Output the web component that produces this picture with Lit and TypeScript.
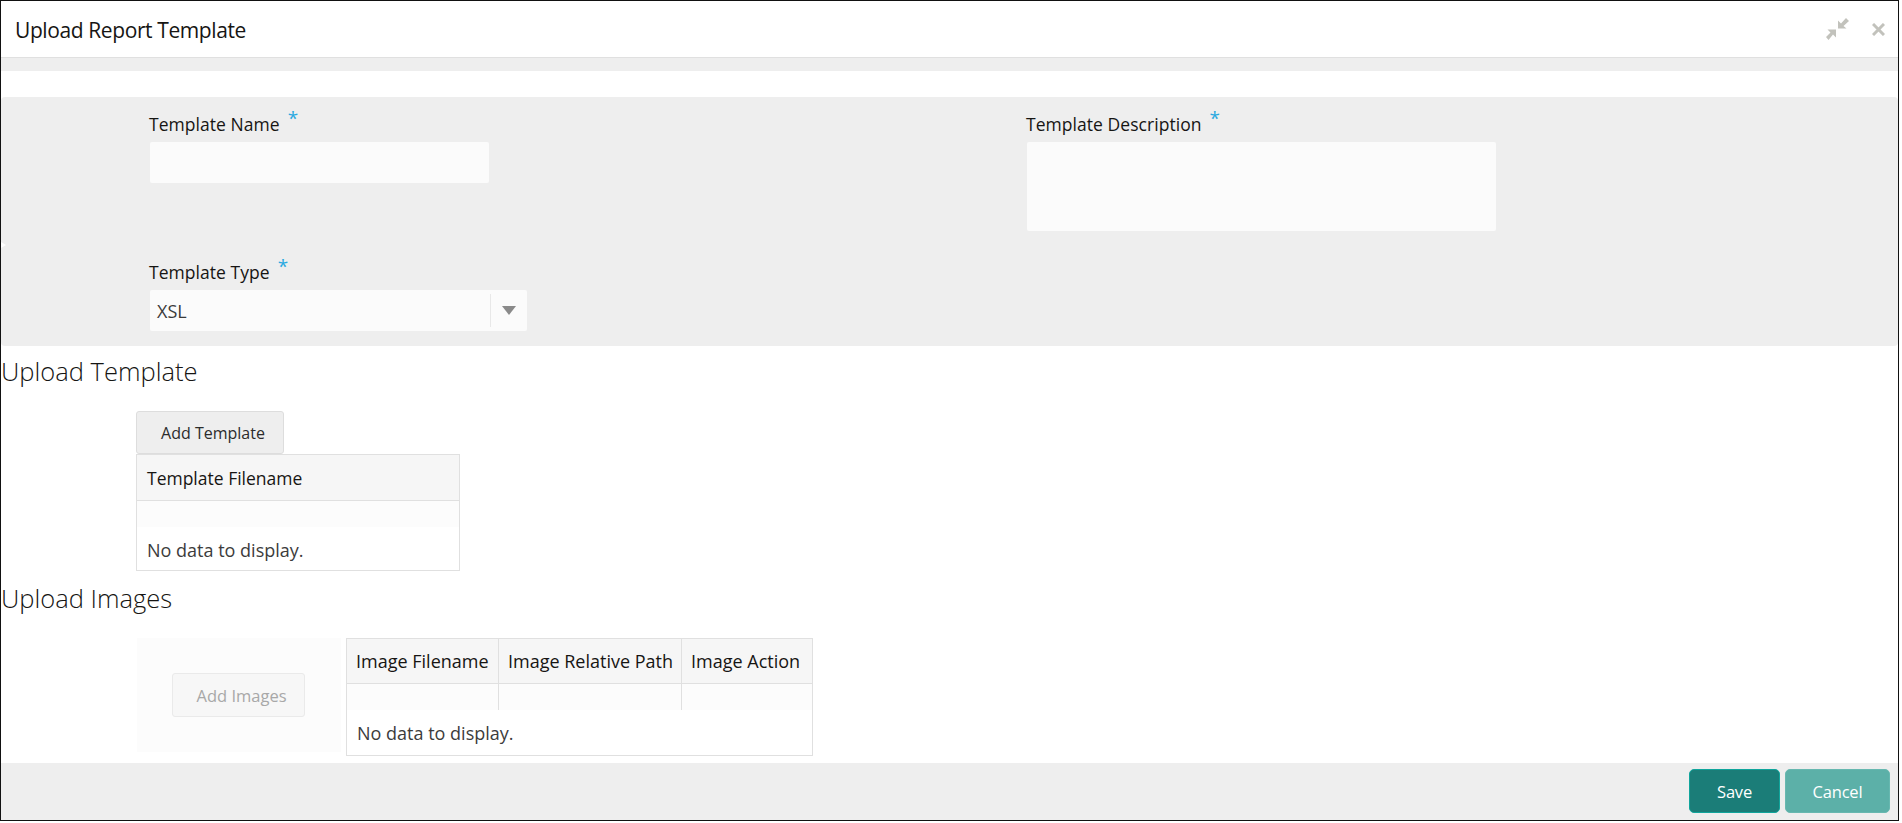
import { LitElement, html, css } from "lit";
import { customElement } from "lit/decorators.js";

@customElement("app-root")
export class AppRoot extends LitElement {
  static styles = css`
    :host { display: block; width: 1902px; height: 823px; background: #fff; font-family: "Open Sans", sans-serif; color: #2c2c2c; overflow: hidden; }
    * { box-sizing: border-box; }
    .frame { width: 1899px; height: 821px; border: 1px solid #111; display: flex; flex-direction: column; }
    .head { height: 57px; flex: none; border-bottom: 1px solid #e0e0e0; display: flex; align-items: center; padding: 0 13px 0 14px; }
    .title { flex: 1; font-size: 21px; color: #161513; letter-spacing: -0.4px; margin-top: 2px; }
    .head svg { display: block; }
    .min { margin-right: 23px; }
    .band { height: 13px; flex: none; background: #eee; }
    .gap { height: 26px; flex: none; }
    .form { position: relative; height: 249px; flex: none; background: #eee; border-radius: 4px; padding: 10px 0 0 149px; display: grid; grid-template-columns: 877px 1fr; grid-template-rows: 148px 1fr; }
    .form::before { content: ""; position: absolute; left: 0; top: 145px; border-left: 5px solid #fff; border-top: 3px solid transparent; border-bottom: 3px solid transparent; }
    .field { display: flex; flex-direction: column; align-items: flex-start; }
    label { font-size: 17.5px; line-height: 25px; height: 35px; padding-top: 5px; color: #161513; display: flex; margin-left: -1px; letter-spacing: 0.05px; }
    label b { font-weight: 400; color: #2aa9e0; font-size: 19px; line-height: 19px; margin: -3px 0 0 8px; }
    .box { background: #fbfbfb; border-radius: 2px; }
    .name { width: 339px; height: 41px; }
    .desc { width: 469px; height: 89px; }
    .select { width: 377px; height: 41px; display: flex; align-items: center; font-size: 18px; padding-left: 7px; color: #3a3a3a; }
    .value { flex: 1; padding-top: 1px; }
    .select i { display: flex; align-items: center; padding-left: 11px; width: 37px; height: 33px; border-left: 1px solid #e8e8e8; }
    .tri { display: block; flex: none; width: 0; height: 0; border-left: 7px solid transparent; border-right: 7px solid transparent; border-top: 9px solid #8a8a8a; }
    h2 { margin: 0; font-weight: 300; font-size: 25.5px; line-height: 33px; color: #161513; flex: none; }
    .h1 { margin-top: 9px; height: 56px; }
    .sec { padding-left: 135px; flex: none; }
    .btn { display: flex; align-items: center; justify-content: center; border-radius: 3px; font-size: 16px; }
    .add { width: 148px; height: 43px; background: #eee; border: 1px solid #ddd; color: #2c2c2c; padding-left: 6px; }
    .tbl { border: 1px solid #e0e0e0; font-size: 17.5px; }
    .t1 { width: 324px; height: 117px; }
    .hdr { display: flex; height: 46px; background: #f6f6f6; border-bottom: 1px solid #e0e0e0; color: #161513; white-space: nowrap; }
    .hdr div, .rowc div { padding-left: 9px; display: flex; align-items: center; }
    .t1 .hdr div { padding-left: 10px; }
    .row { height: 26px; background: #fcfcfc; }
    .empty { height: 43px; display: flex; align-items: center; padding: 2px 0 0 10px; color: #3c3c3c; font-size: 18px; }
    .h2x { margin-top: 11px; height: 56px; }
    .imgs { display: flex; align-items: flex-start; }
    .left { width: 204px; height: 114px; background: #fcfcfc; margin-left: 1px; padding: 35px 0 0 35px; flex: none; }
    .addi { width: 133px; height: 44px; background: #f7f7f7; border: 1px solid #eaeaea; color: #a8a8a8; padding-left: 6px; font-size: 16.5px; }
    .t2 { width: 467px; height: 118px; margin-left: 5px; font-size: 18px; }
    .t2 .hdr { height: 45px; }
    .c1 { width: 152px; flex: none; border-right: 1px solid #e0e0e0; }
    .c2 { width: 183px; flex: none; border-right: 1px solid #e0e0e0; }
    .rowc { display: flex; height: 26px; background: #fcfcfc; }
    .t2 .empty { background: #fff; }
    .foot { margin-top: auto; height: 57px; flex: none; background: #eee; display: flex; justify-content: flex-end; align-items: flex-start; padding: 6px 8px 0 0; gap: 5px; }
    .foot .btn { height: 44px; border-radius: 5px; color: #fff; font-size: 16.5px; letter-spacing: -0.2px; }
    .save { width: 91px; background: #1b7d78; border: 1px solid #10a59c; }
    .cancel { width: 105px; background: #5cb0a8; border: 1px solid #67b8b0; }
  `;

  render() {
    return html`
      <div class="frame">
        <div class="head">
          <div class="title">Upload Report Template</div>
          <svg class="min" width="23" height="22" viewBox="0 0 23 22" fill="#c2c2bc">
            <path d="M12 10.5V2.5l3 3 5-5.5 3 3-5.500 5 3 2.500z"/>
            <path d="M10 11.500v8l-3-3-4.500 5.500L0 19l4.500-4.500-3-3z"/>
          </svg>
          <svg width="13" height="13" viewBox="0 0 13 13" stroke="#c2c2bc" stroke-width="3" fill="none">
            <path d="M1 1l11 11M12 1L1 12"/>
          </svg>
        </div>
        <div class="band"></div>
        <div class="gap"></div>
        <div class="form">
          <div class="field">
            <label>Template Name <b>*</b></label>
            <div class="box name"></div>
          </div>
          <div class="field">
            <label>Template Description <b>*</b></label>
            <div class="box desc"></div>
          </div>
          <div class="field">
            <label>Template Type <b>*</b></label>
            <div class="box select"><span class="value">XSL</span><i><span class="tri"></span></i></div>
          </div>
        </div>
        <h2 class="h1">Upload Template</h2>
        <div class="sec">
          <div class="btn add">Add Template</div>
          <div class="tbl t1">
            <div class="hdr"><div>Template Filename</div></div>
            <div class="row"></div>
            <div class="empty">No data to display.</div>
          </div>
        </div>
        <h2 class="h2x">Upload Images</h2>
        <div class="sec imgs">
          <div class="left"><div class="btn addi">Add Images</div></div>
          <div class="tbl t2">
            <div class="hdr">
              <div class="c1">Image Filename</div>
              <div class="c2">Image Relative Path</div>
              <div>Image Action</div>
            </div>
            <div class="rowc"><div class="c1"></div><div class="c2"></div><div></div></div>
            <div class="empty">No data to display.</div>
          </div>
        </div>
        <div class="foot">
          <div class="btn save">Save</div>
          <div class="btn cancel">Cancel</div>
        </div>
      </div>
    `;
  }
}
